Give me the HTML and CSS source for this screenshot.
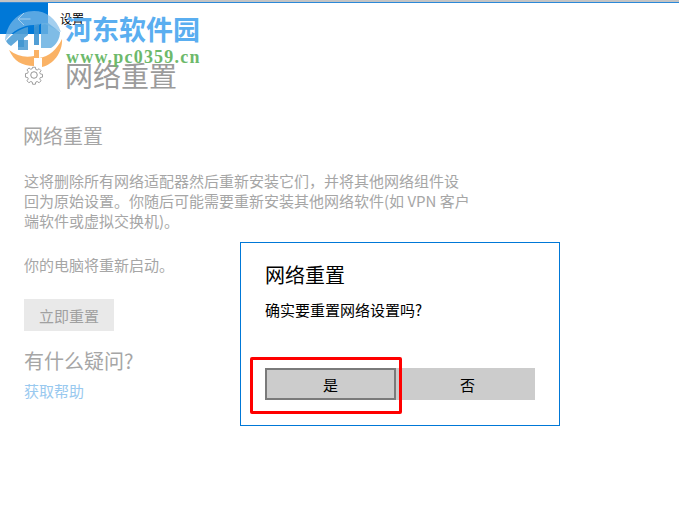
FILE: index.html
```html
<!DOCTYPE html>
<html lang="zh-CN">
<head>
<meta charset="utf-8">
<title>设置</title>
<link rel="stylesheet" href="styles.css">
</head>
<body>
<div class="window">
  <header class="titlebar">
    <div class="back">
      <svg width="14" height="14" viewBox="0 0 14 14" fill="none" stroke="#fff" stroke-width="1"><path d="M13.5 7H1M7 1L1 7l6 6"/></svg>
    </div>
    <span class="title">设置</span>
  </header>
  <main class="page">
    <div class="page-head">
      <svg class="gear" width="20" height="20" viewBox="0 0 22 22" fill="none" stroke="#8a8a8a" stroke-width="1"><path d="M9.3 1.5h3.4l.5 2.7 1.7.7 2.3-1.6 2.4 2.4-1.6 2.3.7 1.7 2.7.5v3.4l-2.7.5-.7 1.7 1.6 2.3-2.4 2.4-2.3-1.6-1.7.7-.5 2.7H9.3l-.5-2.7-1.7-.7-2.3 1.6-2.4-2.4 1.6-2.3-.7-1.7-2.7-.5V9.3l2.7-.5.7-1.7-1.6-2.3 2.4-2.4 2.3 1.6 1.7-.7z" transform="translate(1.1 1.1) scale(.9)"/><circle cx="11" cy="11" r="3.6"/></svg>
      <h1>网络重置</h1>
    </div>
    <h2>网络重置</h2>
    <p class="desc">这将删除所有网络适配器然后重新安装它们，并将其他网络组件设<br>回为原始设置。你随后可能需要重新安装其他网络软件(如 VPN 客户<br>端软件或虚拟交换机)。</p>
    <p class="restart">你的电脑将重新启动。</p>
    <button class="reset">立即重置</button>
    <h3>有什么疑问?</h3>
    <a class="help">获取帮助</a>
  </main>
</div>
<div class="watermark">
  <svg class="wm-logo" width="58" height="57" viewBox="0 0 58 57">
    <path d="M0 31C1 14 13 1 29 1c12 0 22 7 27 21l-16-8-3 1v-2l-8 5v-3C18 15 7 21 0 31z" fill="#7dbbe8" opacity=".7"/>
    <path d="M1 31c7-8 14-12 22-14v8l-4 3v9H13V30l-7 6c-2-1-4-3-5-5z" fill="#4f9fd6" opacity=".9"/>
    <path d="M13 30h10v10H13z" fill="#3e94d0" opacity=".8"/>
    <path d="M29 15l5-1v21h-5z" fill="#3e94d0" opacity=".9"/>
    <path d="M36 13l7 0 12 9c0 7-4 13-9 16H36z" fill="#69b0e2" opacity=".85"/>
    <path d="M4 40c8 6 16 8 25 6v-6h5v8c10-1 18-9 23-19 1 13-9 26-20 28v-9h-8v8C17 56 9 51 4 40z" fill="#f9a44a" opacity=".85"/>
  </svg>
  <div class="wm-name">河东软件园</div>
  <div class="wm-url">www.pc0359.cn</div>
</div>
<section class="dialog">
  <h4>网络重置</h4>
  <p>确实要重置网络设置吗?</p>
  <div class="actions">
    <button class="btn btn-yes">是</button>
    <button class="btn btn-no">否</button>
  </div>
  <div class="highlight"></div>
</section>
</body>
</html>
```
FILE: styles.css
```css
* { box-sizing: border-box; }
html, body { margin: 0; height: 100%; }
body {
  position: relative;
  width: 679px;
  height: 524px;
  overflow: hidden;
  background: #fff;
  font-family: "Noto Sans CJK SC", "Liberation Sans", sans-serif;
  border-top: 2px solid #c4c4c4;
}
.window { display: flex; flex-direction: column; border-top: 1px solid #2b88d8; }
.titlebar { display: flex; height: 31px; align-items: center; }
.back {
  width: 48px; height: 31px; background: #0078d7;
  display: flex; align-items: center; justify-content: center;
}
.title { margin-left: 12px; font-size: 12px; color: #000; }
.page { padding-left: 24px; display: flex; flex-direction: column; align-items: flex-start; }
.page-head { display: flex; align-items: center; margin-top: 17px; height: 48px; }
.gear { margin-right: 21px; }
h1 { margin: 0; font-size: 28px; font-weight: 400; color: #9b9b9b; line-height: 48px; }
h2 { margin: 23px 0 0 -1px; font-size: 20px; font-weight: 400; color: #a6a6a6; line-height: 28px; }
.desc { margin: 21px 0 0; font-size: 15px; line-height: 20px; color: #a6a6a6; white-space: nowrap; }
.restart { margin: 24px 0 0; font-size: 15px; line-height: 20px; color: #a6a6a6; }
.reset {
  margin-top: 24px; width: 90px; height: 32px; border: 0; background: #e9e9e9;
  font: inherit; font-size: 15px; color: #a0a0a0; padding: 0;
}
h3 { margin: 15px 0 0; font-size: 20px; font-weight: 400; color: #a6a6a6; line-height: 30px; }
.help { margin-top: 5px; font-size: 15px; line-height: 20px; color: #99c9ef; }
.watermark { position: absolute; left: 0; top: 0; width: 220px; height: 70px; }
.wm-logo { position: absolute; left: 5px; top: 8px; }
.wm-name {
  position: absolute; left: 65px; top: 10px;
  font-size: 27px; font-weight: 700; line-height: 34px; color: #5aaef0; white-space: nowrap;
}
.wm-url {
  position: absolute; left: 66px; top: 45px; font-family: "Liberation Serif", serif;
  font-size: 18px; font-weight: 700; line-height: 20px; color: #6db96b; letter-spacing: 1.2px; white-space: nowrap;
}
.dialog {
  position: absolute; left: 240px; top: 240px; width: 320px; height: 184px;
  background: #fff; border: 1px solid #0078d7; padding: 0 24px;
}
.dialog h4 { margin: 9px 0 0; font-size: 20px; font-weight: 400; line-height: 46px; color: #000; }
.dialog p { margin: 1px 0 0; font-size: 15px; line-height: 22px; color: #000; }
.actions { display: flex; margin-top: 47px; }
.btn {
  height: 32px; padding: 0; border: 0; background: #cccccc;
  font: inherit; font-size: 15px; color: #000;
}
.btn-yes { width: 131px; border: 2px solid #7a7a7a; }
.btn-no { width: 139px; padding-left: 4px; }
.highlight {
  position: absolute; left: 9px; top: 114px; width: 152px; height: 57px;
  border: 3px solid #f00; border-radius: 2px;
}
```
